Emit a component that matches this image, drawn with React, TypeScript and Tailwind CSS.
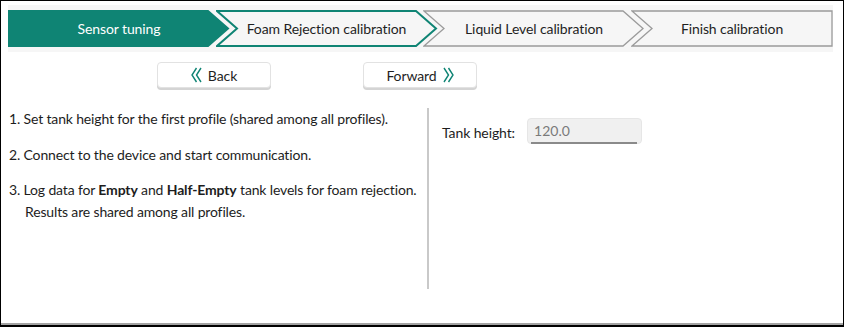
import React from 'react';

const TEAL = '#0f8474';

type StepState = 'done' | 'current' | 'todo';

const steps: { label: string; state: StepState }[] = [
    { label: 'Sensor tuning', state: 'done' },
    { label: 'Foam Rejection calibration', state: 'current' },
    { label: 'Liquid Level calibration', state: 'todo' },
    { label: 'Finish calibration', state: 'todo' },
];

const StepShape = ({ first, last, state }: { first: boolean; last: boolean; state: StepState }) => {
    // width 221 x 37, notch/arrow depth 20
    const pts = [
        '1,1',
        last ? '201,1' : '200,1',
        last ? '201,36' : '220,18.5',
        ...(last ? [] : ['200,36']),
        '1,36',
        ...(first ? [] : ['21,18.5']),
    ].join(' ');
    const fill = state === 'done' ? TEAL : '#f6f6f6';
    const stroke = state === 'todo' ? '#9b9b9b' : TEAL;
    const sw = state === 'todo' ? 1.3 : 2;
    return (
        <svg className="absolute left-0 top-0" width={last ? 203 : 222} height={37} viewBox={`0 0 ${last ? 203 : 222} 37`}>
            <polygon points={pts} fill={fill} stroke={stroke} strokeWidth={sw} strokeLinejoin="miter" />
        </svg>
    );
};

const DoubleChevron = ({ dir }: { dir: 'left' | 'right' }) => (
    <svg width="11" height="16" viewBox="0 0 11 16" className={dir === 'right' ? 'rotate-180' : ''}>
        <polyline points="5.5,1 1,8 5.5,15" fill="none" stroke={TEAL} strokeWidth="1.4" />
        <polyline points="10,1 5.5,8 10,15" fill="none" stroke={TEAL} strokeWidth="1.4" />
    </svg>
);

const NavButton = ({ children }: { children: React.ReactNode }) => (
    <button className="flex h-[26px] w-[114px] items-center justify-center gap-[6px] rounded-[4px] border border-[#e2e2e2] bg-white text-[14px] tracking-[-0.1px] text-[#1f1f1f] shadow-[0_2px_0_#d4d4d4]">
        {children}
    </button>
);

export default function App() {
    return (
        <div
            className="flex h-[327px] w-[844px] flex-col border-x border-t border-b-2 border-black bg-white text-[#1d1d1d]"
            style={{ fontFamily: 'Lato, "Noto Sans", sans-serif' }}
        >
            <div className="flex flex-1 flex-col border-b-2 border-[#a3a3a3]">
                {/* step bar */}
                <div className="ml-[7px] mt-[4px] flex h-[47px] w-[825px] items-center bg-[#f6f6f6]">
                    {steps.map((s, i) => (
                        <div key={s.label} className={`relative h-[37px] shrink-0 ${i === 3 ? 'w-[203px]' : 'w-[207.5px]'}`}>
                            <StepShape first={i === 0} last={i === 3} state={s.state} />
                            <div
                                className={`absolute left-0 top-0 flex h-[37px] items-center justify-center text-[14px] tracking-[-0.1px] ${i === 3 ? 'w-[203px]' : 'w-[222px]'} ${s.state === 'done' ? 'text-white' : 'text-[#1f1f1f]'}`}
                            >
                                {s.label}
                            </div>
                        </div>
                    ))}
                </div>

                {/* nav buttons */}
                <div className="mt-[10px] flex gap-[92px] pl-[156px]">
                    <NavButton>
                        <DoubleChevron dir="left" />
                        <span>Back</span>
                    </NavButton>
                    <NavButton>
                        <span>Forward</span>
                        <DoubleChevron dir="right" />
                    </NavButton>
                </div>

                {/* body */}
                <div className="mt-[20px] flex">
                    <div className="w-[426px] pl-[8px] text-[14px] leading-[22px] tracking-[-0.15px]">
                        <p>1. Set tank height for the first profile (shared among all profiles).</p>
                        <p className="mt-[14px]">2. Connect to the device and start communication.</p>
                        <p className="mt-[13px]">
                            3. Log data for <b className="font-bold">Empty</b> and <b className="font-bold">Half-Empty</b> tank levels for foam rejection.
                            <br />
                            <span className="pl-[16px]">Results are shared among all profiles.</span>
                        </p>
                    </div>
                    <div className="h-[181px] w-[2px] bg-[#c9c9c9]" />
                    <div className="flex items-start gap-[12px] pl-[13px] pt-[10px]">
                        <span className="mt-[4px] text-[14px] tracking-[-0.1px]">Tank height:</span>
                        <div className="relative h-[26px] w-[115px] rounded-[4px] border border-[#e6e6e6] bg-[#f0f0f0] pl-[6px] text-[14px] leading-[24px] text-[#7a7a7a]">
                            120.0
                            <div className="absolute bottom-[-1px] left-[3px] h-[2px] w-[106px] bg-[#8a8a8a]" />
                        </div>
                    </div>
                </div>
            </div>
        </div>
    );
}
